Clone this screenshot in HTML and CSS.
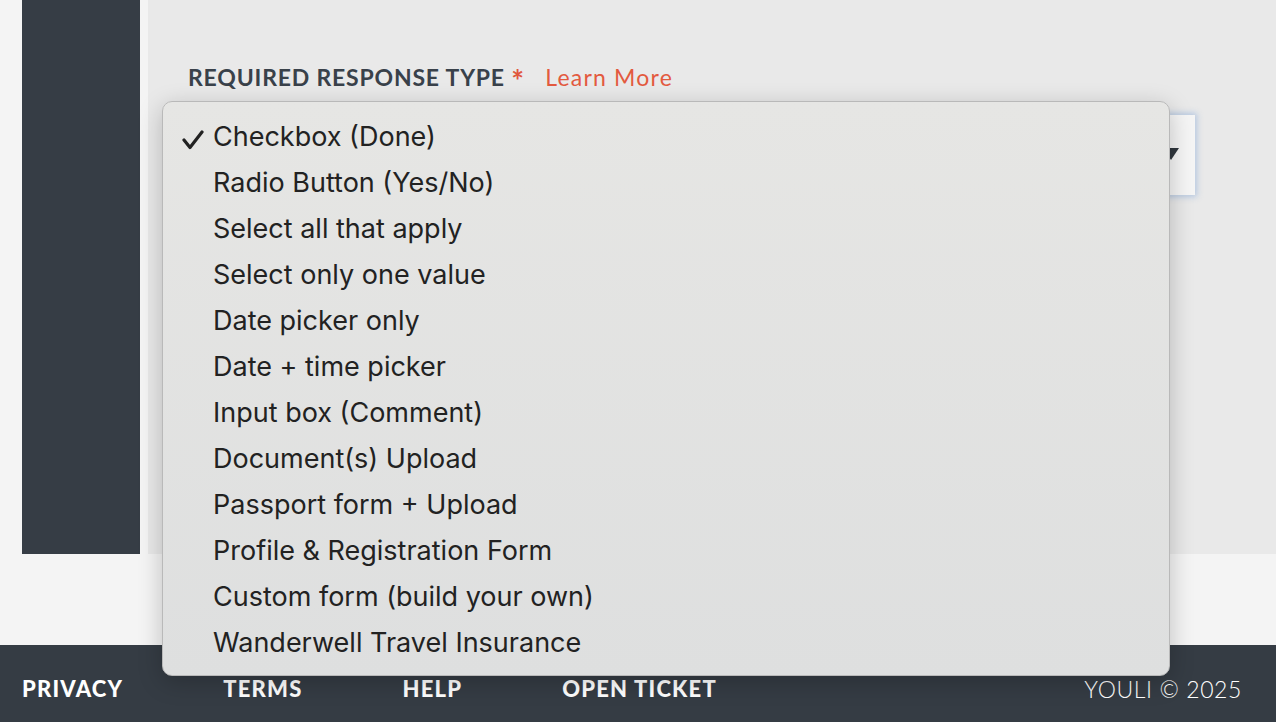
FILE: index.html
```html
<!DOCTYPE html>
<html lang="en">
<head>
<meta charset="UTF-8">
<meta name="viewport" content="width=device-width, initial-scale=1.0">
<title>Response Type</title>
<link rel="stylesheet" href="styles.css">
</head>
<body>
<div class="page">
    <div class="sidebar"></div>
    <div class="content">
        <div class="field">
            <label class="field-label">REQUIRED RESPONSE TYPE <span class="req">*</span> <a class="learn" href="#">Learn More</a></label>
            <div class="select">
                <span class="arrow"></span>
            </div>

            <!-- native select menu, open -->
            <ul class="menu">
                <li class="selected">
                    <svg class="check" width="22" height="20" viewBox="0 0 22 20"><polyline points="2,10 8,17.5 20,2" fill="none" stroke="#222" stroke-width="3.2" stroke-linecap="round" stroke-linejoin="round"/></svg>
                    Checkbox (Done)
                </li>
                <li>Radio Button (Yes/No)</li>
                <li>Select all that apply</li>
                <li>Select only one value</li>
                <li>Date picker only</li>
                <li>Date + time picker</li>
                <li>Input box (Comment)</li>
                <li>Document(s) Upload</li>
                <li>Passport form + Upload</li>
                <li>Profile &amp; Registration Form</li>
                <li>Custom form (build your own)</li>
                <li>Wanderwell Travel Insurance</li>
            </ul>
        </div>
    </div>
</div>

<footer class="footer">
    <nav class="links">
        <a href="#">PRIVACY</a>
        <a href="#">TERMS</a>
        <a href="#">HELP</a>
        <a href="#">OPEN TICKET</a>
    </nav>
    <div class="copy">YOULI &copy; 2025</div>
</footer>
</body>
</html>
```

FILE: styles.css
```css
body {
    margin: 0;
    background: #f4f4f4;
    font-family: 'Lato', 'Liberation Sans', sans-serif;
    color: #333;
}
.page {
    display: flex;
    gap: 8px;
    padding-left: 22px;
    height: 554px;
    margin-bottom: 91px;
}
.sidebar {
    width: 118px;
    background: #363d45;
}
.content {
    flex: 1;
    background: #e9e9e9;
    padding: 62px 81px 0 40px;
}
.field {
    position: relative;
}
.field-label {
    display: block;
    font-size: 23px;
    font-weight: 700;
    color: #39414a;
    letter-spacing: 0.8px;
    line-height: 30px;
}
.req {
    display: inline-block;
    color: #e0573c;
    font-size: 30px;
    line-height: 20px;
    vertical-align: -6px;
    margin-right: 14px;
}
.learn {
    color: #e35a3f;
    font-weight: 400;
    font-size: 23px;
    letter-spacing: 1.2px;
    text-decoration: none;
}
.select {
    position: relative;
    margin-top: 23px;
    height: 80px;
    background: #f5f5f5;
    box-shadow: 0 0 6px 2px rgba(120, 160, 215, 0.45);
}
.arrow {
    position: absolute;
    right: 16px;
    top: 33px;
    width: 0;
    height: 0;
    border-left: 8px solid transparent;
    border-right: 8px solid transparent;
    border-top: 12px solid #2f363d;
}
.menu {
    position: absolute;
    left: -26px;
    top: 39px;
    width: 1006px;
    margin: 0;
    padding: 12px 0 9px;
    list-style: none;
    background: linear-gradient(#e6e6e4, #dedfdf);
    border: 1px solid #b9b9b9;
    border-radius: 10px;
    box-shadow: 0 6px 24px rgba(0, 0, 0, 0.22);
    font-family: 'Inter', 'Liberation Sans', sans-serif;
    font-size: 27px;
    color: #222;
}
.menu li {
    position: relative;
    height: 46px;
    line-height: 46px;
    padding-left: 50px;
}
.check {
    position: absolute;
    left: 19px;
    top: 16px;
}
.footer {
    height: 77px;
    background: #353c44;
    display: flex;
    align-items: center;
    justify-content: space-between;
    padding: 10px 34px 0 22px;
    box-sizing: border-box;
}
.links {
    display: flex;
}
.links a {
    color: #fff;
    text-decoration: none;
    font-size: 22px;
    font-weight: 900;
    letter-spacing: 1.2px;
    margin-right: 100px;
}
.copy {
    color: #fff;
    font-size: 23px;
    font-weight: 300;
    letter-spacing: 0.6px;
}
```
